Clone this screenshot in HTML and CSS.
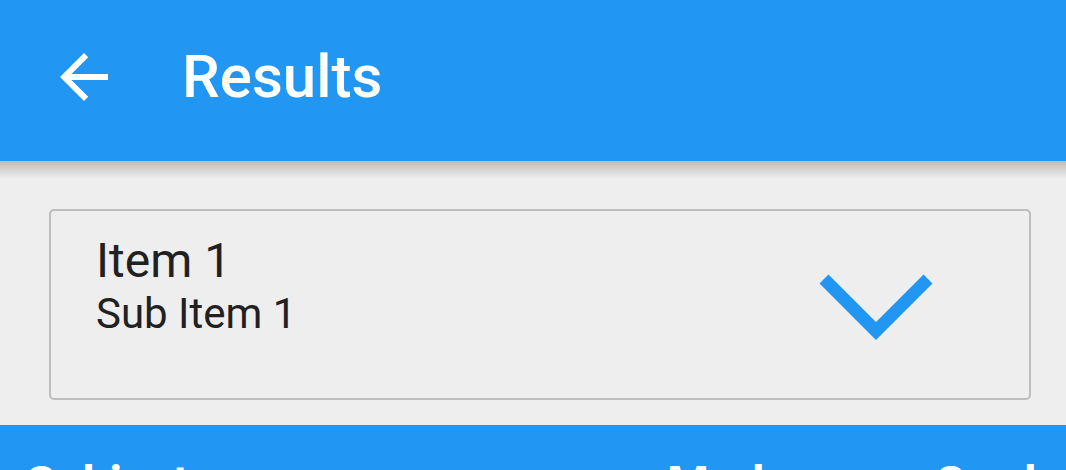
FILE: index.html
```html
<!DOCTYPE html>
<html>
<head>
<meta charset="utf-8">
<link rel="stylesheet" href="styles.css">
</head>
<body>
<header class="appbar">
  <svg class="back" viewBox="0 0 24 24" width="72" height="72"><path d="M20 11H7.83l5.59-5.59L12 4l-8 8 8 8 1.41-1.41L7.83 13H20v-2z" fill="#fff"/></svg>
  <h1 class="title">Results</h1>
</header>
<main class="content">
  <div class="card">
    <div class="texts">
      <div class="item">Item 1</div>
      <div class="sub">Sub Item 1</div>
    </div>
    <svg class="chev" width="130" height="80" viewBox="0 0 130 80"><polyline points="13,14 65,66 117,14" fill="none" stroke="#2196F3" stroke-width="12.7" stroke-linejoin="miter"/></svg>
  </div>
</main>
<div class="tablehead">
  <span class="col c1">Subject</span>
  <span class="col c2">Marks</span>
  <span class="col c3">Grade</span>
</div>
</body>
</html>
```

FILE: styles.css
```css
html, body {
  margin: 0;
  padding: 0;
  background: #eeeeee;
  font-family: Roboto, "Noto Sans", sans-serif;
  overflow: hidden;
  height: 470px;
}
.appbar {
  position: relative;
  height: 161px;
  background: #2196F3;
  display: flex;
  align-items: center;
  padding: 0 0 8px 48px;
  box-sizing: border-box;
}
.appbar::after {
  content: "";
  position: absolute;
  left: 0;
  right: 0;
  top: 161px;
  height: 18px;
  background: linear-gradient(#bdbdbd, rgba(238,238,238,0));
}
.back {
  display: block;
  flex: none;
}
.title {
  margin: 0 0 0 62px;
  color: #fff;
  font-weight: 500;
  font-size: 60px;
  line-height: 72px;
}
.content {
  padding: 48px 35px 25px 49px;
}
.card {
  height: 191px;
  box-sizing: border-box;
  border: 2px solid #bdbdbd;
  border-radius: 5px;
  display: flex;
  align-items: center;
  justify-content: space-between;
  padding: 0 88px 0 45px;
}
.texts {
  align-self: flex-start;
  padding-top: 22px;
  color: #212121;
}
.item {
  font-size: 48px;
  line-height: 56px;
}
.sub {
  font-size: 42px;
  line-height: 49px;
}
.chev {
  display: block;
  flex: none;
}
.tablehead {
  background: #2196F3;
  height: 45px;
  display: flex;
  color: #fff;
  font-weight: 700;
  font-size: 48px;
  line-height: 56px;
  padding-top: 31px;
  box-sizing: border-box;
  overflow: hidden;
}
.c1 { margin-left: 26px; width: 641px; flex: none; }
.c2 { width: 267px; flex: none; }
.c3 { flex: none; }
```
